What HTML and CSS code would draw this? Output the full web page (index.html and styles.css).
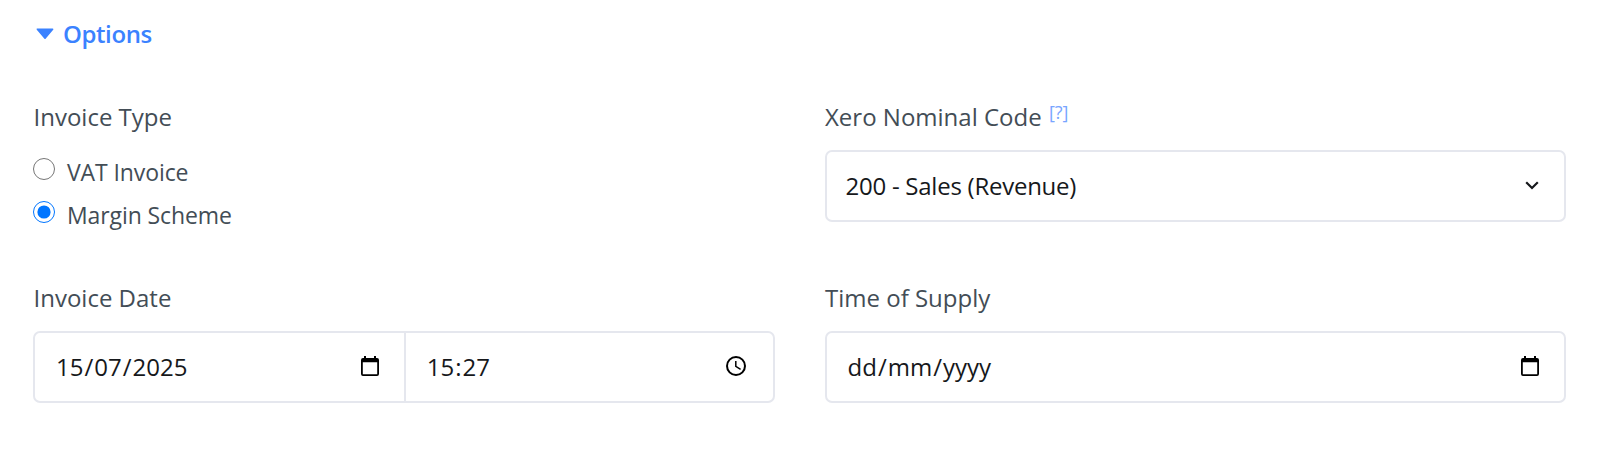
FILE: index.html
```
<!DOCTYPE html>
<html lang="en">
<head>
    <meta charset="UTF-8">
    <meta name="viewport" content="width=device-width, initial-scale=1.0">
    <title>Invoice Options</title>
    <link rel="stylesheet" href="styles.css">
</head>
<body>
    <main>
        <h2 class="options-title">
            <svg class="caret" width="18" height="12" viewBox="0 0 18 12"><path d="M1.4 1.2h15.2L9 10.2z" fill="currentColor" stroke="currentColor" stroke-width="1.6" stroke-linejoin="round"/></svg>
            <span>Options</span>
        </h2>

        <form class="options-form">
            <div class="field">
                <div class="label">Invoice Type</div>
                <div class="radios">
                    <label class="radio">
                        <input type="radio" name="type" value="vat">
                        <span>VAT Invoice</span>
                    </label>
                    <label class="radio">
                        <input type="radio" name="type" value="margin" checked>
                        <span>Margin Scheme</span>
                    </label>
                </div>
            </div>

            <div class="field">
                <div class="label">Xero Nominal Code <a class="help">[?]</a></div>
                <div class="control select">
                    <span>200 - Sales (Revenue)</span>
                    <svg width="14" height="9" viewBox="0 0 14 9"><path d="M1.2 1.2L7 7l5.8-5.8" fill="none" stroke="#16181b" stroke-width="2.2"/></svg>
                </div>
            </div>

            <div class="field">
                <div class="label">Invoice Date</div>
                <div class="control group">
                    <div class="part">
                        <span>15<i>/</i>07<i>/</i>2025</span>
                        <svg width="18" height="20" viewBox="0 0 18 20"><path d="M3 0h2v2h8V0h2v2h1a2 2 0 0 1 2 2v14a2 2 0 0 1-2 2H2a2 2 0 0 1-2-2V4a2 2 0 0 1 2-2h1zM1.8 6.2v12h14.4v-12z" fill="#000" fill-rule="evenodd"/></svg>
                    </div>
                    <div class="part time">
                        <span>15<i>:</i>27</span>
                        <svg width="20" height="20" viewBox="0 0 20 20"><circle cx="10" cy="10" r="9" fill="none" stroke="#000" stroke-width="2"/><path d="M9.8 5v5.4l4.8 2.9" fill="none" stroke="#000" stroke-width="1.5"/></svg>
                    </div>
                </div>
            </div>

            <div class="field">
                <div class="label">Time of Supply</div>
                <div class="control group">
                    <div class="part">
                        <span>dd<i>/</i>mm<i>/</i>yyyy</span>
                        <svg width="18" height="20" viewBox="0 0 18 20"><path d="M3 0h2v2h8V0h2v2h1a2 2 0 0 1 2 2v14a2 2 0 0 1-2 2H2a2 2 0 0 1-2-2V4a2 2 0 0 1 2-2h1zM1.8 6.2v12h14.4v-12z" fill="#000" fill-rule="evenodd"/></svg>
                    </div>
                </div>
            </div>
        </form>
    </main>
</body>
</html>
```
FILE: styles.css
```
* {
    box-sizing: border-box;
}

body {
    margin: 0;
    background-color: white;
    color: #434d56;
    font-family: "Open Sans", sans-serif;
    font-size: 24px;
    line-height: 36px;
}

main {
    padding: 16px 34px 0 33px;
}

.options-title {
    display: flex;
    align-items: center;
    gap: 9px;
    margin: 0 0 47px;
    padding-left: 3px;
    color: #3b82ff;
    font-size: 24px;
    font-weight: 600;
    letter-spacing: -0.4px;
}

.caret {
    margin-top: -1px;
}

.options-form {
    display: grid;
    grid-template-columns: 1fr 1fr;
    column-gap: 50px;
    row-gap: 58px;
}

.label {
    margin-bottom: 15px;
    padding-left: 0.5px;
}

.help {
    margin-left: 1px;
    color: #78a5ff;
    font-size: 18px;
    line-height: 0;
    vertical-align: 7px;
}

.radios {
    height: 72px;
}

.radio {
    display: flex;
    align-items: flex-start;
    gap: 12px;
    height: 43px;
    font-size: 23px;
    line-height: 44px;
    letter-spacing: -0.1px;
}

.radio input {
    width: 22px;
    height: 22px;
    margin: 8px 0 0;
    accent-color: #0075ff;
}

.control {
    display: flex;
    height: 72px;
    border: 2px solid #e5e7ee;
    border-radius: 7px;
    color: #16181b;
}

.select {
    align-items: center;
    justify-content: space-between;
    padding: 0 25px 0 19px;
    letter-spacing: -0.25px;
}

.select svg {
    margin-top: -2px;
}

.group {
    display: grid;
    grid-auto-flow: column;
    grid-auto-columns: 1fr;
}

.part {
    display: flex;
    align-items: center;
    justify-content: space-between;
    padding: 0 25px 0 21px;
}

.part + .part {
    border-left: 2px solid #e5e7ee;
}

.part.time {
    padding-right: 27px;
}

.part svg {
    margin-top: -2px;
}

.part i {
    padding: 0 1px;
    font-style: normal;
}
```
